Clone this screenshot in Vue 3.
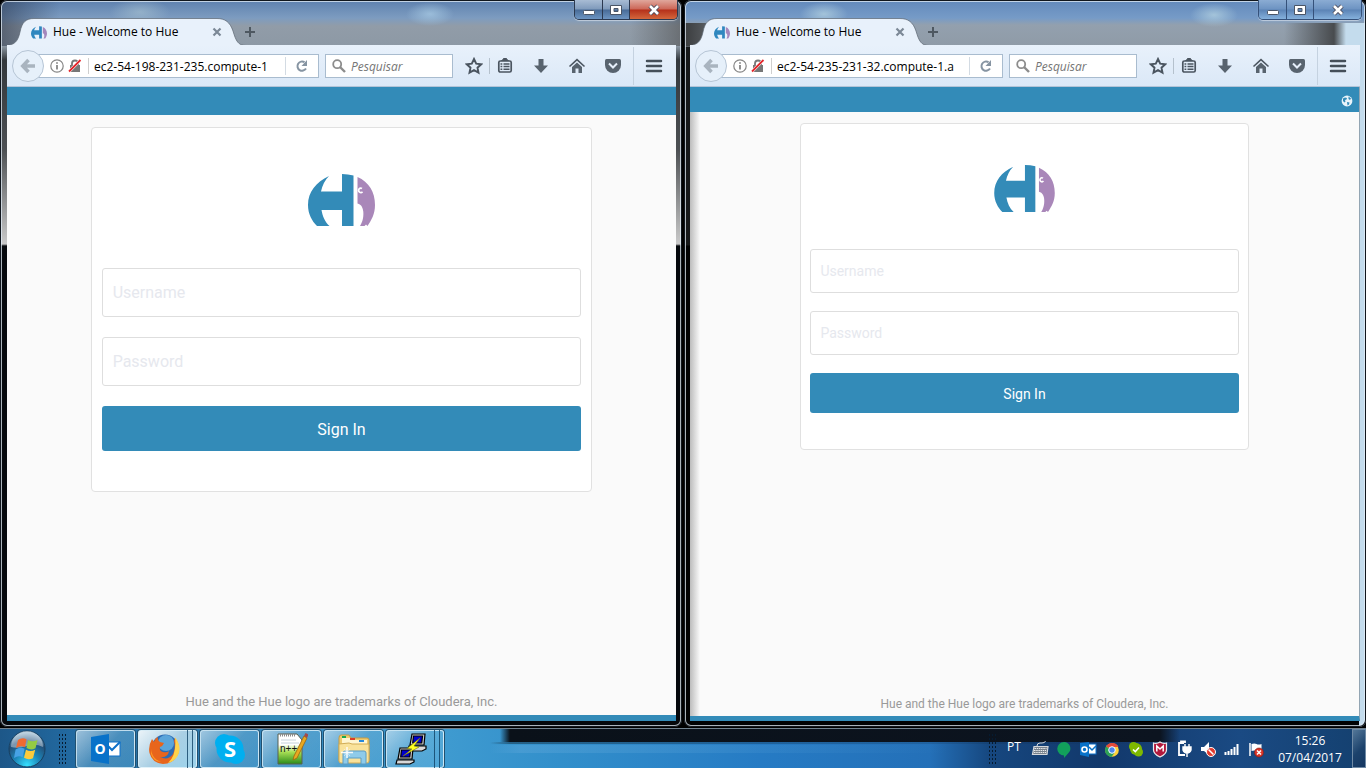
<script setup>
const windows = [
  { id: 'left', title: 'Hue - Welcome to Hue', url: 'ec2-54-198-231-235.compute-1', globe: false },
  { id: 'right', title: 'Hue - Welcome to Hue', url: 'ec2-54-235-231-32.compute-1.a', globe: true },
]
const footerText = 'Hue and the Hue logo are trademarks of Cloudera, Inc.'
</script>

<template>
  <div class="desktop">
    <main class="windows">
      <section v-for="w in windows" :key="w.id" class="window" :class="'window-' + w.id" :aria-label="w.title">
        <div class="controls">
          <button class="ctl" type="button" aria-label="Minimize">
            <svg width="14" height="12" viewBox="0 0 14 12"><rect x="1.5" y="6.5" width="11" height="4" rx="1" fill="#fff" stroke="#4a5566" /></svg>
          </button>
          <button class="ctl ctl-max" type="button" aria-label="Maximize">
            <svg width="14" height="12" viewBox="0 0 14 12"><path d="M1.5 1.5h11v9h-11zM5 4.5v3h4v-3z" fill="#fff" fill-rule="evenodd" stroke="#4a5566" /></svg>
          </button>
          <button class="ctl ctl-close" type="button" aria-label="Close">
            <svg width="14" height="12" viewBox="0 0 14 12"><path d="M3 2l8 8M11 2l-8 8" stroke="#4a4a5a" stroke-width="4.5" /><path d="M3 2l8 8M11 2l-8 8" stroke="#fff" stroke-width="2.6" /></svg>
          </button>
        </div>

        <div class="tabstrip">
          <div class="tab">
            <svg class="tab-shape" width="240" height="29" viewBox="0 0 240 29">
              <path d="M0 29V27.5C9 27 12 23 14 14C16 4 20 .5 28 .5H211C219 .5 224 4 227 13C230 23 232 27.5 240 27.5V29Z" fill="#e8f1fb" />
              <path d="M0 27.5C9 27 12 23 14 14C16 4 20 .5 28 .5H211C219 .5 224 4 227 13C230 23 232 27.5 240 27.5" fill="none" stroke="#5b6570" stroke-opacity=".7" />
            </svg>
            <svg class="favicon" width="16" height="13" viewBox="0 0 67 53">
              <path fill="#2f87bf" d="M21 2C8 8 0 18 0 31C0 40 4 47 9 52H21.5C17 48 14.500 42 13.5 36H34V52H45.5V1.5Q40 0 34 0V17.5H13Q15 8 21 2Z" />
              <path fill="#a487bd" d="M49.5 3C61 8 67 18 67 31C67 40 63 47 59.5 52H52C57 46 58 31 49.5 29.5Z" />
            </svg>
            <span class="tab-title">{{ w.title }}</span>
            <button class="tab-close" type="button" aria-label="Close tab">
              <svg width="10" height="10" viewBox="0 0 10 10"><path d="M1.500 1.5l7 7M8.5 1.5l-7 7" stroke="#7b8896" stroke-width="2.2" /></svg>
            </button>
          </div>
          <button class="new-tab" type="button" aria-label="New tab">
            <svg width="12" height="12" viewBox="0 0 12 12"><path d="M6 1v10M1 6h10" stroke="#4e5861" stroke-width="2" /></svg>
          </button>
        </div>

        <div class="toolbar">
          <button class="back" type="button" aria-label="Back">
            <svg width="16" height="16" viewBox="0 0 16 16"><path d="M8.500 2L2.800 8L8.500 14M3 8H15" fill="none" stroke="#a9b4bf" stroke-width="3.6" /></svg>
          </button>
          <div class="urlbar">
            <svg class="info" width="14" height="14" viewBox="0 0 14 14"><circle cx="7" cy="7" r="6.2" fill="none" stroke="#868686" stroke-width="1.2" /><path d="M7 6v4.5M7 3.2v1.6" stroke="#767676" stroke-width="1.6" /></svg>
            <svg class="lock" width="14" height="14" viewBox="0 0 14 14"><path d="M4 7V4.5a3 3 0 0 1 6 0V7" fill="none" stroke="#777" stroke-width="1.8" /><rect x="2" y="6" width="10" height="7" fill="#777" /><path d="M1 12.5L12.5 1" stroke="#fff" stroke-width="3" /><path d="M1 12.5L12.5 1" stroke="#e3262b" stroke-width="1.8" /></svg>
            <input class="url" type="text" :value="w.url" aria-label="Address">
            <button class="reload" type="button" aria-label="Reload">
              <svg width="14" height="14" viewBox="0 0 14 14"><path d="M11 9.5A4.600 4.600 0 1 1 9.5 3.2" fill="none" stroke="#8694a2" stroke-width="2" /><path d="M12 1v6H6.5z" fill="#8694a2" /></svg>
            </button>
          </div>
          <label class="search">
            <svg width="14" height="14" viewBox="0 0 14 14"><circle cx="5.2" cy="5.2" r="4" fill="none" stroke="#8c8c8c" stroke-width="1.8" /><path d="M8 8l5 5" stroke="#8c8c8c" stroke-width="2.4" /></svg>
            <input type="text" placeholder="Pesquisar" aria-label="Pesquisar">
          </label>
          <button class="tool star" type="button" aria-label="Bookmark">
            <svg width="18" height="18" viewBox="0 0 18 18"><path d="M9 2L11.2 6.7L16.2 7.3L12.5 10.7L13.5 15.7L9 13.2L4.5 15.7L5.5 10.7L1.8 7.3L6.8 6.7Z" fill="none" stroke="#4b5560" stroke-width="1.9" /></svg>
          </button>
          <button class="tool list" type="button" aria-label="Bookmarks list">
            <svg width="18" height="18" viewBox="0 0 18 18"><path d="M5.5 3.5Q7 3.5 7.5 1.5h3Q11 3.5 12.5 3.5z" fill="#4b5560" stroke="#4b5560" /><rect x="2.8" y="4" width="12.4" height="11" rx="1.5" fill="none" stroke="#4b5560" stroke-width="1.7" /><path d="M4.5 7h1.8M7.5 7h6M4.5 9.6h1.8M7.5 9.6h6M4.5 12.2h1.8M7.5 12.2h6" stroke="#4b5560" stroke-width="1.5" /></svg>
          </button>
          <button class="tool" type="button" aria-label="Downloads">
            <svg width="18" height="18" viewBox="0 0 18 18"><path d="M6.5 2h5v6.5H16L9 16L2 8.5h4.5z" fill="#58636e" /></svg>
          </button>
          <button class="tool" type="button" aria-label="Home">
            <svg width="18" height="18" viewBox="0 0 18 18"><path d="M1.5 9.5L9 2.7L16.5 9.5" fill="none" stroke="#4b5560" stroke-width="1.6" /><path d="M4 10L9 5.5L14 10v6h-3.5v-4.5h-3V16H4z" fill="#58636e" /></svg>
          </button>
          <button class="tool" type="button" aria-label="Pocket">
            <svg width="18" height="18" viewBox="0 0 18 18"><path d="M2.5 2h13q1.5 0 1.5 1.5V8a8 8 0 0 1-16 0V3.5Q1 2 2.5 2z" fill="#58636e" /><path d="M5 6.5l4 4l4-4" fill="none" stroke="#e6effa" stroke-width="2" /></svg>
          </button>
          <button class="tool menu" type="button" aria-label="Menu">
            <svg width="18" height="16" viewBox="0 0 18 16"><path d="M2 3h14M2 8h14M2 13h14" stroke="#454f59" stroke-width="2.5" stroke-linecap="round" /></svg>
          </button>
        </div>

        <div class="page">
          <header class="navbar">
            <svg v-if="w.globe" width="12" height="12" viewBox="0 0 12 12"><circle cx="6" cy="6" r="5.4" fill="#eaf4fa" /><path d="M2 3.5L4 2.500L6 3L5.5 4.5L4 5L4.500 6.500L3.500 7.500L2 6zM7.500 1.500L10 3.500L9 5L7.500 4zM6 7l2.500 .5L8 9.500L6.500 10.500z" fill="#338bb8" /></svg>
          </header>
          <form class="card" @submit.prevent>
            <svg class="logo" viewBox="0 0 67 52" role="img" aria-label="Hue">
              <path fill="#338bb8" d="M21 2C8 8 0 18 0 31C0 40 4 47 9 52H21.5C17 48 14.500 42 13.5 36H34V52H45.5V1.5Q40 0 34 0V17.5H13Q15 8 21 2Z" />
              <path fill="#a987b9" d="M49.5 3C61 8 67 18 67 31C67 40 63.5 46 59.5 52L58 50.500L56.5 52H52C56.500 46 57.5 31 49.5 29.5Z" />
              <path fill="none" stroke="#fff" stroke-width="1.7" d="M54 14.500A2.200 2.200 0 1 0 54.500 17.800" />
            </svg>
            <input type="text" placeholder="Username" aria-label="Username">
            <input type="password" placeholder="Password" aria-label="Password">
            <button type="submit">Sign In</button>
          </form>
          <footer>{{ footerText }}</footer>
        </div>
      </section>
    </main>

    <nav class="taskbar" aria-label="Taskbar">
      <button class="start" type="button" aria-label="Start">
        <svg width="38" height="38" viewBox="0 0 38 38">
          <defs>
            <radialGradient id="orb" cx=".5" cy=".95" r=".9"><stop offset="0" stop-color="#35e0ff" /><stop offset=".4" stop-color="#1c86b9" /><stop offset=".75" stop-color="#234f78" /><stop offset="1" stop-color="#8fb3cc" /></radialGradient>
          </defs>
          <circle cx="19" cy="19" r="18" fill="url(#orb)" stroke="#183f5f" />
          <path d="M3 17A16 16 0 0 1 35 17Q27 13 19 16Q10 19 3 17" fill="#fff" opacity=".4" />
          <path d="M10 10q4-3 8.500-.8l-1.500 8q-4.500-2-9 .8z" fill="#ef6a31" />
          <path d="M20 10q4.500 2.500 9.500 0l-2 8.200q-4.500 2.500-9-.2z" fill="#94cb43" />
          <path d="M7.600 19.500q4.400-3 9-.8l-2 8.500q-4-2-8.600.8z" fill="#47a2e5" />
          <path d="M18 19.800q4.500 2.500 9.200 0l-2.200 8.400q-4.500 2.300-9-.4z" fill="#fdcb3c" />
        </svg>
      </button>
      <span class="grip grip-left"></span>
      <div class="apps">
        <button class="app" type="button" aria-label="Outlook">
          <svg width="32" height="32" viewBox="0 0 32 32"><rect x="14" y="9" width="16" height="14" fill="#fff" stroke="#0e70c9" /><path d="M17 12l5 5l8-8" fill="none" stroke="#0e70c9" stroke-width="2" /><path d="M1 4L19 1v30L1 28z" fill="#0872c9" /><text x="10" y="21" text-anchor="middle" font-family="Open Sans, sans-serif" font-weight="700" font-size="14" fill="#fff">O</text></svg>
        </button>
        <button class="app stacked active" type="button" aria-label="Firefox">
          <svg width="32" height="32" viewBox="0 0 32 32">
            <circle cx="17" cy="15" r="13.5" fill="#2d6cb3" /><circle cx="18" cy="10" r="8" fill="#5aa5da" />
            <path d="M27 5Q34 15 29 23Q24 31 15 31Q4 30 1.5 20Q0 13 4 6l2 3q1-4 4-5q-1 3 2 5l4 1q-1 3-4 4q-1 4 3 5q4 1 6-1q-1 7-9 6q8 4 13-3q3-6 1-13z" fill="#e8651c" />
            <path d="M27 4Q35 15 29 24Q25 29 20 30Q29 22 27 4" fill="#ffd34a" /><path d="M3 12Q2 25 13 29Q5 28 3 21z" fill="#ff9a24" />
          </svg>
        </button>
        <button class="app" type="button" aria-label="Skype">
          <svg width="32" height="36" viewBox="0 -2 32 36"><circle cx="10" cy="10" r="9" fill="#00aff0" /><circle cx="22" cy="22" r="9" fill="#00aff0" /><circle cx="16" cy="16" r="13.5" fill="#00aff0" /><text x="16" y="24" text-anchor="middle" font-family="Open Sans, sans-serif" font-weight="700" font-size="22" fill="#fff">S</text></svg>
        </button>
        <button class="app" type="button" aria-label="Notepad++">
          <svg width="32" height="34" viewBox="0 0 32 34">
            <defs><linearGradient id="note" x2="0" y2="1"><stop offset=".35" stop-color="#fff" /><stop offset=".6" stop-color="#a8df55" /><stop offset="1" stop-color="#2b8b19" /></linearGradient></defs>
            <path d="M2 2h19l5 6v24H2z" fill="url(#note)" stroke="#596052" /><path d="M4 3h16" stroke="#8a8a8a" stroke-width="3" stroke-dasharray="1 1" /><path d="M5 8h15M5 11h18" stroke="#c6d2dc" />
            <path d="M28 4l3 2L21 26l-4 2l1-4z" fill="#e9a820" stroke="#9a650d" stroke-width=".8" /><path d="M28 4l1.500-3l3 1.500L31 6z" fill="#a34b4b" />
            <text x="4" y="20" font-family="Liberation Sans, sans-serif" font-size="10" fill="#111">n++</text>
          </svg>
        </button>
        <button class="app" type="button" aria-label="Explorer">
          <svg width="34" height="32" viewBox="0 0 34 32">
            <path d="M2 5q0-3 2-3h8l2 3h16q2 0 2 2v21H2z" fill="#eecb70" stroke="#c49b45" /><path d="M5 5h9l2 2h14v4H5z" fill="#fff5cf" /><path d="M5 3h4v2H5z" fill="#19a94f" /><path d="M13 5h5v2h-5z" fill="#dd3d26" /><path d="M22 7h5v2h-5z" fill="#2588dc" /><path d="M2 11l10-1l3 1h17v17q0 2-2 2H4q-2 0-2-2z" fill="#f9e29a" stroke="#d2ad57" />
            <path d="M6 31V20q0-2 2-2h19q2 0 2 2v11h-5v-6H11v6z" fill="#8ecbea" stroke="#5b9cc4" /><path d="M10 14v11M4 19.500h12" stroke="#fff" stroke-width="1.500" opacity=".9" /><path d="M7 16l6 7M13 16l-6 7" stroke="#fff" opacity=".5" />
          </svg>
        </button>
        <button class="app stacked putty" type="button" aria-label="PuTTY">
          <svg width="32" height="32" viewBox="0 0 32 32">
            <g stroke="#000" stroke-width="1.2"><path d="M17 1h13l-1 11H15z" fill="#c9c9c9" /><path d="M18.500 3h9l-.8 7h-9z" fill="#00c" /><path d="M14 13l17 0v3l-4 2H13z" fill="#d8d8d8" /><path d="M5 15h13l-1 11H3z" fill="#c9c9c9" /><path d="M6.500 17h9l-.8 7h-9z" fill="#00c" /><path d="M2 27h17v2l-4 2H1z" fill="#d8d8d8" /></g>
            <path d="M25 5L12 15.500l5 .5L8 23l16-9l-5-1z" fill="#ff2" stroke="#77770a" stroke-width=".6" />
          </svg>
        </button>
      </div>
      <div class="tray">
        <span class="grip"></span>
        <span class="lang">PT</span>
        <svg viewBox="0 0 18 18"><path d="M3 6.500h14l-1 8H1.500z" fill="#77818c" stroke="#d5d8dc" stroke-width="1.2" /><path d="M3.500 8.500h12M3 10.500h12M3 12.500h12" stroke="#e8eaec" stroke-width="1.2" stroke-dasharray="1.500 .7" /><path d="M6 6q0-3 3-3h2q3 0 3.500-2" fill="none" stroke="#d5d8dc" /></svg>
        <svg viewBox="0 0 18 18"><path d="M9 2a6.500 6.500 0 0 1 4 11.500L9 18v-2.500A6.500 6.500 0 0 1 9 2" fill="#12a05b" /></svg>
        <svg viewBox="0 0 18 18"><rect x="8" y="4" width="9" height="10" fill="#fff" stroke="#0e70c9" /><path d="M10 7l3 3l4-4" fill="none" stroke="#0872c9" stroke-width="1.5" /><path d="M1 3l9-1v15l-9-2z" fill="#0872c9" /><circle cx="5.5" cy="9.5" r="2.5" fill="none" stroke="#fff" stroke-width="1.6" /></svg>
        <svg viewBox="0 0 18 18"><circle cx="9" cy="10" r="6.8" fill="#fdd23c" /><path d="M9 10L3 6.500A7 7 0 0 1 15.500 7H9z" fill="#e24a3b" /><path d="M9 10L3 6.500A7 7 0 0 0 8.500 17L12 12z" fill="#2da157" /><circle cx="9" cy="10" r="3.3" fill="#4a87ee" stroke="#fff" /></svg>
        <svg viewBox="0 0 18 18"><circle cx="6.5" cy="6.5" r="4.5" fill="#7eb900" /><circle cx="11.5" cy="12" r="4.5" fill="#7eb900" /><circle cx="9" cy="9" r="6" fill="#7eb900" /><path d="M6 9.500l2.300 2.200L12 7.500" fill="none" stroke="#fff" stroke-width="1.6" /></svg>
        <svg viewBox="0 0 18 18"><path d="M2.500 3Q6 4 9 2q3 2 6.500 1v7q0 4-6.500 7q-6.500-3-6.500-7z" fill="#b2193c" stroke="#eee" stroke-width="1.2" /><path d="M5.800 11.500V6L9 9l3.200-3v5.500" fill="none" stroke="#fff" stroke-width="1.5" /></svg>
        <svg viewBox="0 0 18 18"><path d="M9 3H4v12h6M6 3V1.500h4V3" fill="none" stroke="#fff" stroke-width="1.8" /><path d="M8 7h8v3q-1 3-4 3q-3 0-4-3zM10 4v3M14 4v3M12 13v4" fill="#fff" stroke="#fff" stroke-width="1.4" /></svg>
        <svg viewBox="0 0 18 18"><path d="M2 7h3l5-5v13l-5-4H2z" fill="#fff" /><circle cx="12" cy="12" r="4.5" fill="#e23b2f" stroke="#fff" /><path d="M9.500 9.500l5 5" stroke="#fff" stroke-width="1.5" /></svg>
        <svg viewBox="0 0 18 18"><path d="M2.500 15v-3M5.500 15v-4M8.500 15v-6M11.500 15V7M14.500 15V4" stroke="#fff" stroke-width="2" /></svg>
        <svg viewBox="0 0 18 18"><path d="M3 3v13" stroke="#fff" stroke-width="1.5" /><path d="M4.500 4q3-1 5 0t5 0v7q-3 1-5 0t-5 0z" fill="#fff" /><circle cx="12" cy="12.5" r="4.5" fill="#dc3527" stroke="#7d1b12" stroke-width=".6" /><path d="M10 10.500l4 4M14 10.500l-4 4" stroke="#fff" stroke-width="1.5" /></svg>
        <time class="clock"><span>15:26</span><span>07/04/2017</span></time>
        <button class="peek" type="button" aria-label="Show desktop"></button>
      </div>
    </nav>
  </div>
</template>

<style>
body {
  margin: 0;
  background: #05080c;
}
</style>

<style scoped>
* {
  box-sizing: border-box;
}

button {
  display: flex;
  align-items: center;
  justify-content: center;
  padding: 0;
  border: 0;
  background: none;
}

svg {
  display: block;
  flex: none;
}

.desktop {
  display: flex;
  flex-direction: column;
  min-height: 100vh;
  font: 12px "Open Sans", "Noto Sans", sans-serif;
  background: #000;
}

.windows {
  display: grid;
  flex: 1;
  grid-template-columns: 1fr 1fr;
  gap: 2px;
  padding-bottom: 1px;
}

.window {
  position: relative;
  display: flex;
  flex-direction: column;
  min-width: 0;
  padding: 2px 6px 6px;
  border-radius: 7px;
  box-shadow: inset 0 0 0 1px #10161d, inset 0 0 0 2px rgba(225, 236, 246, 0.75);
}

.window-left {
  padding-left: 7px;
  background:
    radial-gradient(ellipse 30px 14px at 140px 12px, rgba(180, 205, 215, 0.5), transparent),
    radial-gradient(ellipse 24px 12px at 430px 14px, rgba(170, 205, 230, 0.7), transparent),
    linear-gradient(90deg, rgba(30, 40, 60, 0.5), transparent 60px, transparent 630px, rgba(80, 80, 80, 0.6)) 0 0 / 100% 46px no-repeat,
    linear-gradient(#5d80ae 0, #7d9cc0 18px, #919ca8 26px, #8d99a5 46px, #33383d 60px, #4d5053 150px, #c9c9c9 244px, #05080c 246px);
}

.window-right {
  background:
    radial-gradient(ellipse 24px 12px at 140px 14px, rgba(180, 210, 225, 0.75), transparent),
    radial-gradient(ellipse 24px 12px at 530px 15px, rgba(180, 210, 225, 0.75), transparent),
    linear-gradient(90deg, transparent calc(100% - 7px), #c4dced 0) 0 23px / 100% 100% no-repeat,
    linear-gradient(90deg, #3a3c3e, #4d5053 15px, transparent 60px, transparent 600px, #484b4e 650px, #c4dced 662px) 0 23px / 100% 23px no-repeat,
    linear-gradient(#6289bb 0, #769bc7 18px, #93a0ae 25px, #8f9ba7 46px, #16181a 47px, #16181a 245px, #010203 246px);
}

.controls {
  position: absolute;
  top: 0;
  right: 4px;
  display: flex;
  height: 20px;
  border: 1px solid #2b3950;
  border-top: 0;
  border-radius: 0 0 5px 5px;
  box-shadow: 0 1px 1px rgba(255, 255, 255, 0.5);
  overflow: hidden;
}

.ctl {
  width: 27px;
  background: linear-gradient(#a8bcd4, #7f9abb 48%, #486b97 52%, #6d95c2);
}

.ctl-max {
  border-left: 1px solid #2b3950;
}

.ctl-close {
  width: 48px;
  border-left: 1px solid #2b3950;
}

.window-left .ctl-close {
  background: linear-gradient(#e0a79c, #cc6657 48%, #b5301a 52%, #d4673c);
}

.window-right .controls,
.window-right .ctl {
  border-color: #35517a;
}

.window-right .ctl {
  background: linear-gradient(#8bacd3, #6d93c2 48%, #5b83b5 52%, #85b1dc);
}

.tabstrip {
  display: flex;
  height: 43px;
  padding-top: 15px;
  overflow: hidden;
}

.tab {
  position: relative;
  display: flex;
  align-items: center;
  width: 233px;
  padding: 2px 18px 0 24px;
}

.tab-shape {
  position: absolute;
  top: 1px;
  left: -1px;
}

.favicon,
.tab-title,
.tab-close {
  position: relative;
}

.tab-title {
  flex: 1;
  padding-left: 6px;
  color: #000;
  line-height: 20px;
}

.new-tab {
  width: 20px;
  margin-top: 2px;
}

.toolbar {
  display: flex;
  align-items: center;
  height: 42px;
  padding: 1px 2px 0 5px;
  background: linear-gradient(#e8f1fb, #dbe8f7);
  border-bottom: 1px solid #b3c4d8;
}

.back {
  position: relative;
  width: 32px;
  height: 32px;
  background: #e6f0fa;
  border: 1px solid #b6c5d5;
  border-radius: 50%;
}

.urlbar {
  display: flex;
  flex: 1;
  align-items: center;
  min-width: 0;
  height: 24px;
  margin-left: -7px;
  padding-left: 12px;
  background: #fff;
  border: 1px solid #a9bccf;
}

.info {
  margin-right: 4px;
}

.url {
  flex: 1;
  min-width: 0;
  height: 16px;
  margin-left: 6px;
  padding: 0 0 0 5px;
  border: 0;
  border-left: 1px solid #cfcfcf;
  outline: 0;
  background: transparent;
  color: #000;
  font: inherit;
}

.reload {
  width: 33px;
  height: 18px;
  border-left: 1px solid #d3dbe3;
}

.search {
  display: flex;
  align-items: center;
  width: 128px;
  height: 24px;
  margin: 0 9px 0 6px;
  padding-left: 6px;
  background: #fff;
  border: 1px solid #a9bccf;
}

.search input {
  flex: 1;
  min-width: 0;
  padding: 0 0 0 5px;
  border: 0;
  outline: 0;
  background: transparent;
  font: inherit;
}

.search input::placeholder {
  color: #757575;
  font-style: italic;
  opacity: 1;
}

.tool {
  width: 36px;
  height: 38px;
}

.star {
  width: 24px;
}

.list {
  position: relative;
  width: 32px;
  margin-left: 3px;
  margin-right: 2px;
}

.list::before {
  content: "";
  position: absolute;
  top: 11px;
  left: 0;
  height: 16px;
  border-left: 1px solid #b5c1cd;
}

.menu {
  width: 41px;
  margin-left: 2px;
  border-left: 1px solid #c5d2e0;
}

.page {
  display: flex;
  flex: 1;
  flex-direction: column;
  align-items: center;
  background: #fafafa;
  border-bottom: 6px solid #338bb8;
  font-family: Roboto, sans-serif;
}

.window-right .page {
  background: linear-gradient(90deg, #bcbcbc, #fafafa 10px);
  border-right: 1px solid #93a5b3;
  border-bottom-width: 5px;
}

.navbar {
  display: flex;
  align-items: center;
  align-self: stretch;
  justify-content: flex-end;
  height: 28px;
  padding: 3px 6px 0 0;
  background: #338bb8;
}

.window-right .navbar {
  height: 25px;
}

.card {
  display: flex;
  flex-direction: column;
  width: 75%;
  margin-top: 12px;
  padding: 46px 10px 40px;
  background: #fff;
  border: 1px solid #e1e1e1;
  border-radius: 4px;
}

.logo {
  align-self: center;
  width: 67px;
  height: 52px;
  margin-bottom: 42px;
}

.card input {
  height: 49px;
  margin-bottom: 20px;
  padding: 0 10px;
  background: #fff;
  border: 1px solid #dedede;
  border-radius: 3px;
  outline: 0;
  font: 16px Roboto, sans-serif;
}

.card input::placeholder {
  color: #e6e8ee;
  opacity: 1;
}

.card button {
  height: 45px;
  padding-top: 1px;
  background: #338bb8;
  border-radius: 3px;
  color: #fff;
  font: 16px Roboto, sans-serif;
}

.window-right .card {
  width: 67%;
  margin-top: 11px;
  padding: 41px 9px 36px;
}

.window-right .logo {
  width: 61px;
  height: 47px;
  margin-bottom: 37px;
}

.window-right .card input {
  height: 44px;
  margin-bottom: 18px;
  padding: 0 9px;
  font-size: 14px;
}

.window-right .card button {
  height: 40px;
  font-size: 14px;
}

footer {
  margin-top: auto;
  padding-bottom: 4px;
  color: #999;
  font-size: 13px;
  line-height: 18px;
}

.window-right footer {
  padding-bottom: 3px;
  font-size: 12px;
}

.taskbar {
  display: flex;
  align-items: center;
  height: 40px;
  padding-left: 8px;
  border-top: 1px solid #71828f;
  background:
    linear-gradient(90deg, transparent 500px, #0a1119 510px, #0c1420 1160px, transparent 1180px) 0 0 / 100% 13px no-repeat,
    linear-gradient(90deg, transparent 490px, rgba(10, 17, 25, 0.4) 510px, transparent 1180px) 0 13px / 100% 2px no-repeat,
    linear-gradient(90deg, transparent 490px, rgba(100, 170, 220, 0.35) 520px, transparent 950px) 0 16px / 100% 8px no-repeat,
    linear-gradient(90deg, #1d5788 0, #2269a0 70px, #3f9bd0 440px, #328fcb 560px, #267bc4 760px, #2470b8 930px, #16477f 990px, #12386b 1100px, #1a4a83 1240px, #14406f 1366px);
}

.start {
  width: 38px;
  height: 38px;
}

.grip {
  width: 9px;
  height: 31px;
  background: radial-gradient(circle, #061b30 1px, transparent 1px) 0 0 / 3px 4px;
}

.grip-left {
  margin-left: 12px;
}

.apps {
  display: flex;
  gap: 3px;
  margin-left: 9px;
}

.app {
  position: relative;
  width: 59px;
  height: 38px;
  background: linear-gradient(135deg, rgba(220, 238, 248, 0.65), rgba(140, 200, 230, 0.35) 50%, rgba(110, 190, 230, 0.3));
  border: 1px solid rgba(225, 242, 250, 0.8);
  border-radius: 3px;
  box-shadow: 0 0 0 1px #20506f;
}

.stacked {
  padding-right: 8px;
}

.stacked::after {
  content: "";
  position: absolute;
  top: -1px;
  right: 3px;
  width: 4px;
  height: 38px;
  border: 1px solid rgba(15, 65, 100, 0.8);
  border-width: 0 1px;
}

.active {
  background: linear-gradient(135deg, #eaf3f8, #a9cfe4 50%, #9cd3ec);
}

.putty {
  width: 58px;
}

.tray {
  display: flex;
  align-items: center;
  align-self: stretch;
  margin-left: auto;
  color: #fff;
}

.tray svg {
  width: 18px;
  height: 18px;
  margin: 0 3px;
}

.lang {
  width: 31px;
  padding: 0 0 4px 10px;
}

.clock {
  display: flex;
  flex-direction: column;
  align-items: center;
  width: 84px;
  line-height: 17px;
}

.peek {
  align-self: stretch;
  width: 14px;
  background: linear-gradient(135deg, #537798, #1c426c 55%, #143660);
  border: 1px solid #6f8aa5;
}
</style>
